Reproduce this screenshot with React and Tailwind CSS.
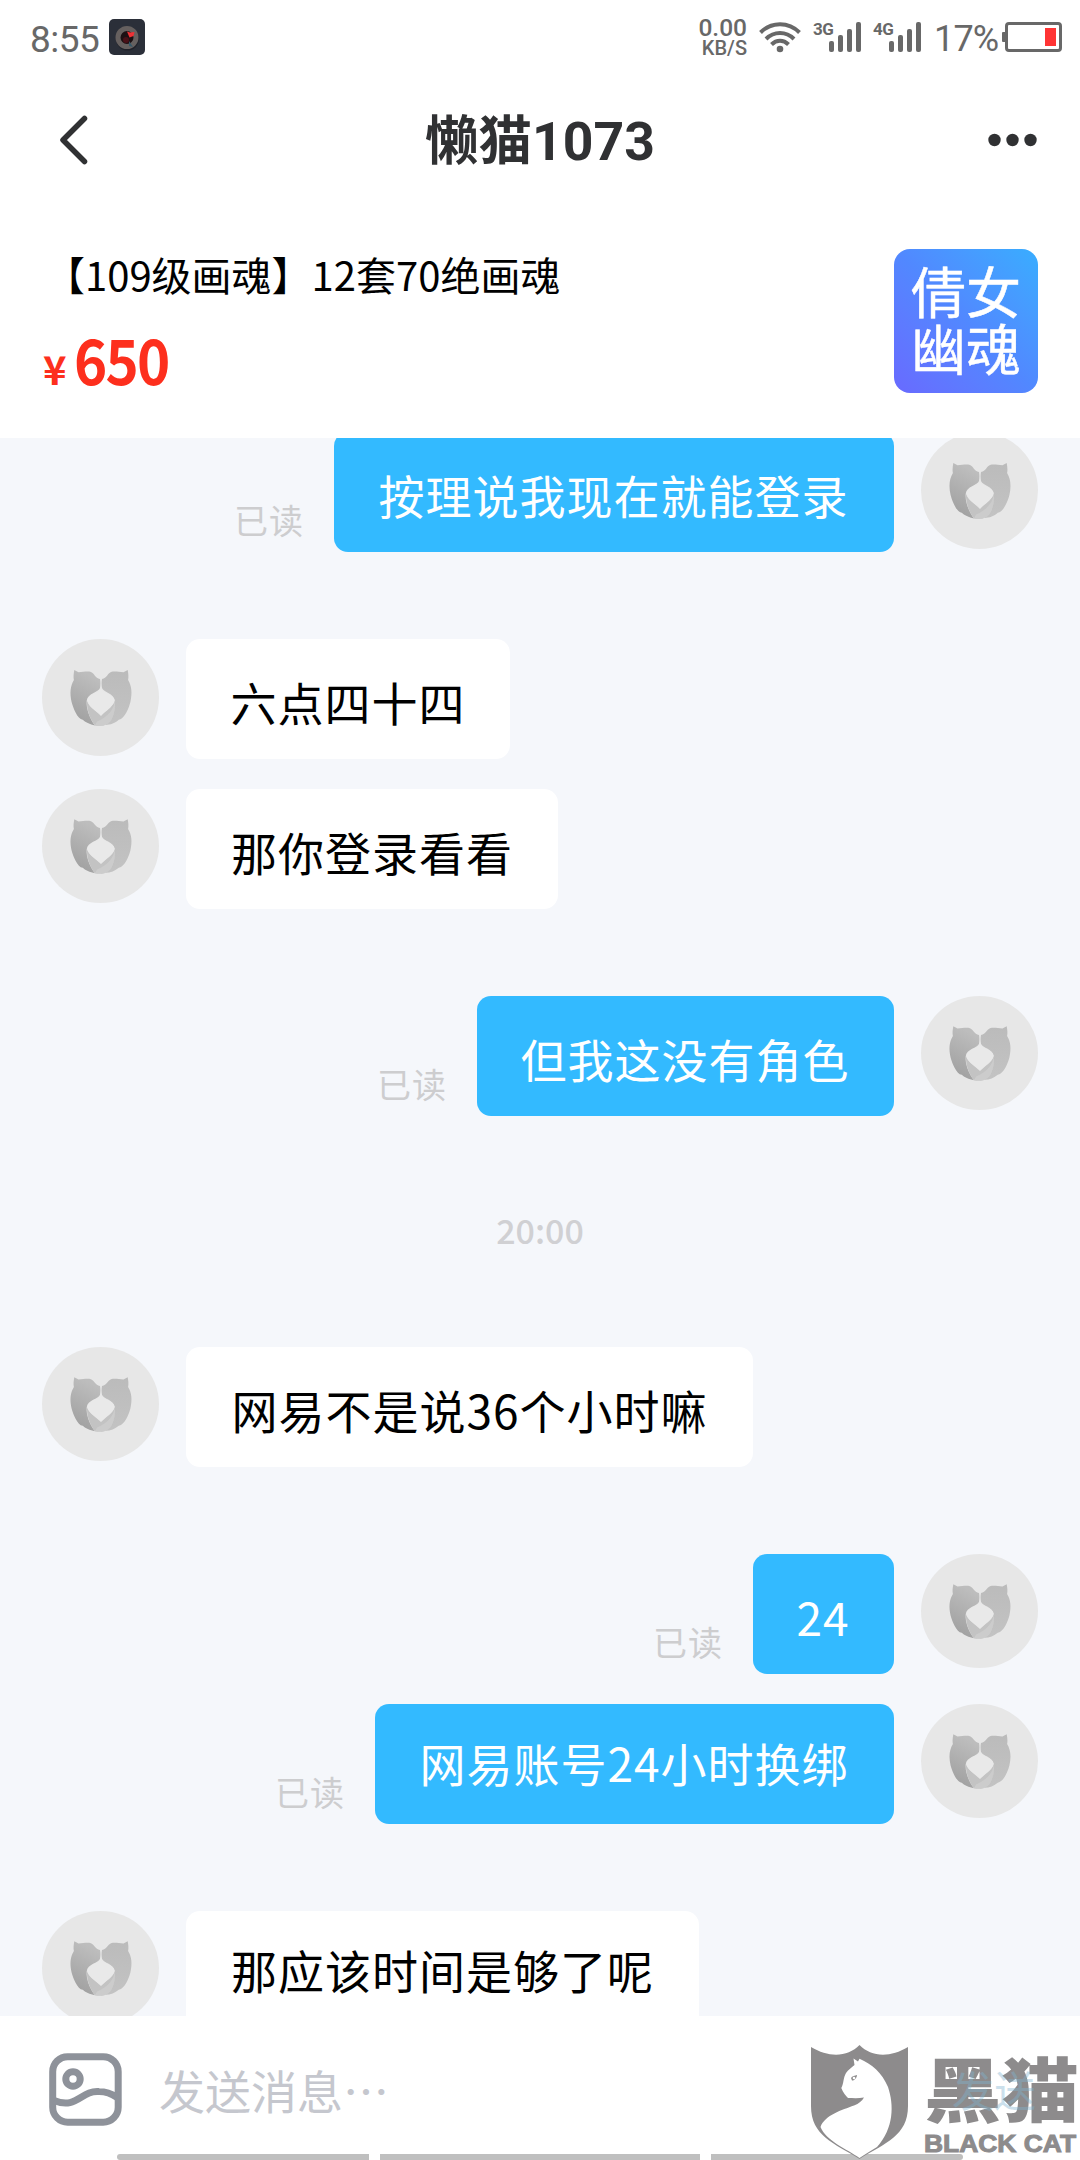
const CJK = "font-['Noto_Sans_CJK_SC',sans-serif]";

function Avatar({ tall }) {
  return (
    <div className={`flex w-[117px] shrink-0 items-center justify-center rounded-[50%] bg-[#e7e7e7] ${tall ? "h-[117px]" : "h-[114px]"}`}>
      <svg className={tall ? "h-[117px] w-[117px]" : "h-[114px] w-[117px]"} viewBox="0 0 117 117" preserveAspectRatio="none">
        <defs>
          <linearGradient id="catLeft" x1="0.3" y1="0" x2="0" y2="1">
            <stop offset="0" stopColor="#bdbdbd" />
            <stop offset="0.45" stopColor="#aeaeae" />
            <stop offset="1" stopColor="#9c9c9c" />
          </linearGradient>
          <linearGradient id="catRight" x1="0" y1="0" x2="0" y2="1">
            <stop offset="0" stopColor="#bbbbbb" />
            <stop offset="1" stopColor="#c3c3c3" />
          </linearGradient>
        </defs>
        <path fill="url(#catLeft)" d="M32.3 31L36.5 33.3C41 33.2 45 32 49 33C52.5 34.5 53 39 58 40C58.6 43 58.5 46 58 49C56.500 53.500 45.500 54 44.700 62C44 70 48 80 53 86.500C48 85.500 43 83 40.700 80.800C35.500 80.300 31 68.500 29.600 63C27.600 54 28.300 47 31.900 41C31.200 38 31.700 34.500 32.300 31Z" />
        <path fill="url(#catRight)" d="M85.700 31L81.500 33.300C77 33.200 73 32 69 33C65.500 34.500 65 39 60 40C59.400 43 59.500 46 60 49C61.500 53.500 72 54 72.900 62C73.500 70 71.500 75 69.500 80L63 86C69 86 73 84 76.800 80.800C83 79.500 87 68.500 88.400 63C90.400 54 89.700 47 86.100 41C86.800 38 86.300 34.500 85.700 31Z" />
        <path fill="#c3c3c3" d="M44.700 61C47 68.500 54 71.500 59 77C64 71.500 70 69 72.900 61C74 71 71.500 77 69.500 80.500C66 86 60 88.200 53 86.500C48 80 45 72 44.700 61Z" />
        <path fill="#d0d0d0" opacity=".7" d="M72.900 61C72.500 70 66 78 55 82.500L53 86.500C60 88.200 67 86 69.500 80.500C72 76 73.500 69 72.900 61Z" />
        <path fill="#e9e9e9" d="M59 49.500C60.500 53.500 71 55 72.600 61C72.500 67 64 71 59 76.500C54 71 46 68 45.400 61C46.500 55 57 53.500 59 49.500Z" />
      </svg>
    </div>
  );
}

function Received({ children, width, tall, pad = "pt-1" }) {
  return (
    <div className="flex h-[120px] items-start gap-[27px] pl-[42px]">
      <Avatar tall={tall} />
      <div className={`flex h-[120px] items-center justify-center rounded-[14px] bg-white text-[46px] leading-none tracking-[1px] whitespace-nowrap text-black ${pad} ${width}`}>{children}</div>
    </div>
  );
}

function Sent({ children, width, tall, pad = "pt-1" }) {
  return (
    <div className="flex h-[120px] items-start justify-end pr-[42px]">
      <span className="mr-[30px] pt-[69px] text-[34px] leading-[38px] tracking-[1px] text-[#cdcdcf]">已读</span>
      <div className={`mr-[27px] flex h-[120px] items-center justify-center rounded-[14px] bg-[#33baff] pr-px text-[46px] leading-none tracking-[1px] whitespace-nowrap text-white ${pad} ${width}`}>{children}</div>
      <Avatar tall={tall} />
    </div>
  );
}

function Signal({ label }) {
  return (
    <div className="flex h-[30px] w-[48px] items-end">
      <span className="mr-[-6px] w-[22px] self-start font-[Roboto] text-[17px] leading-[15px] font-bold tracking-[-0.500px]">{label}</span>
      <div className="flex items-end gap-1">
        <i className="h-[11px] w-[5px] rounded-[2px] bg-[#686868]" />
        <i className="h-[17px] w-[5px] rounded-[2px] bg-[#686868]" />
        <i className="h-[23px] w-[5px] rounded-[2px] bg-[#686868]" />
        <i className="h-[30px] w-[5px] rounded-[2px] bg-[#686868]" />
      </div>
    </div>
  );
}

function StatusBar() {
  return (
    <div className="flex h-[75px] items-start justify-between pt-[18px] pr-[18px] pl-[30px] font-[Roboto] text-[#686868]">
      <div className="flex items-start gap-[9px]">
        <span className="w-[70px] text-[37px] leading-[43px] tracking-[-0.500px]">8:55</span>
        <svg className="mt-px h-9 w-9" viewBox="0 0 36 36">
          <rect width="36" height="36" rx="5" fill="#2b2f39" />
          <circle cx="18.500" cy="20" r="11.500" fill="#20222a" />
          <circle cx="18" cy="18.500" r="9" fill="#1c1013" stroke="#66605f" strokeWidth="5" />
          <path d="M18 12.500l3 1 4.500-.5-1 4-4 1.500z" fill="#ef3135" />
          <path d="M20 22l4 6-4-1z" fill="#355768" />
          <circle cx="17" cy="21" r="3" fill="#4a1118" />
        </svg>
      </div>
      <div className="flex items-start">
        <div className="mr-3 flex w-[50px] flex-col items-end font-medium">
          <span className="text-[24.500px] leading-[20px]">0.00</span>
          <span className="text-[20px] leading-[20px]">KB/S</span>
        </div>
        <svg className="mt-1 mr-[12px] h-[31px] w-[42px]" viewBox="0 0 42 31" fill="none" stroke="#686868" strokeWidth="4">
          <path d="M1.500 10.500C12.500-.5 29.500-.5 40.500 10.500M7 17C15 9 27 9 35 17M12.500 22.500C17.500 17.500 24.500 17.500 29.500 22.500" />
          <circle cx="21" cy="27" r="3.300" fill="#686868" stroke="none" />
        </svg>
        <div className="mt-1 flex gap-3">
          <Signal label="3G" />
          <Signal label="4G" />
        </div>
        <span className="ml-[13px] w-[68px] text-[36px] leading-[43px] tracking-[-0.800px]">17%</span>
        <svg className="mt-1 h-[30px] w-[60px]" viewBox="0 0 60 30">
          <rect x="0" y="10" width="5" height="10" rx="1" fill="#686868" />
          <rect x="4.500" y="1.500" width="54" height="27" rx="2.500" fill="none" stroke="#686868" strokeWidth="3" />
          <rect x="43" y="6" width="11" height="18" fill="#ff3434" />
        </svg>
      </div>
    </div>
  );
}

function Watermark() {
  return (
    <div className="absolute top-[28px] left-[811px] flex h-[116px] w-[269px] text-[#8d8b8c]">
      <svg className="h-[116px] w-[97px] shrink-0" viewBox="0 0 97 116">
        <path fill="#8d8b8c" d="M0 3C18 14 37 13 48.500 1C60 13 79 14 97 3V62C97 92 74 99 48.500 115C23 99 0 92 0 62Z" />
        <path fill="#fff" d="M42.500 14.500L47 17.500L48.500 14.800C61 20 71 29 77 43C83 61 83 84 66 103C60 107 54 110 48.500 114C36 105 15 97 9.500 83C14 71 31 66 43 61.500C48 59.500 51 57 53 53.500C47 54.500 42 54 37 54C35 52 32 48.500 30.300 44C33 39 32 34 35 29C37 26 41 23 43.500 21Z" />
        <path fill="#8d8b8c" d="M40 34C41 32 44 31.500 46 31C46 34 43 37 41 36.500Z" />
        <circle cx="43" cy="34" r="1.300" fill="#fff" />
      </svg>
      <div className="ml-[16px] flex w-[153px] flex-col">
        <span className="mt-[8px] h-[70px] origin-top-left scale-x-[1.020] scale-y-[0.930] text-[76px] leading-[74px] font-black whitespace-nowrap">黑猫</span>
        <span className="mt-[9px] origin-left scale-x-[1.100] font-['Liberation_Sans',sans-serif] text-[24px] leading-[26px] font-bold whitespace-nowrap [-webkit-text-stroke:1px_#8d8b8c]">BLACK CAT</span>
      </div>
    </div>
  );
}

export default function App() {
  return (
    <div className={`flex h-[2160px] w-[1080px] flex-col overflow-hidden bg-[#f5f7fb] ${CJK}`}>
      <header className="h-[438px] shrink-0 bg-white">
        <StatusBar />
        <div className="flex h-[129px] items-center justify-between px-[42px]">
          <svg className="h-[54px] w-[54px]" viewBox="0 0 54 54" fill="none" stroke="#303133" strokeWidth="5.500" strokeLinecap="round" strokeLinejoin="round">
            <path d="M42.500 5.500L21 27L42.500 48.500" />
          </svg>
          <h1 className="pt-1 font-[Roboto,'Noto_Sans_CJK_SC',sans-serif] text-[53.500px] leading-[60px] font-bold text-[#303133]">懒猫1073</h1>
          <svg className="h-[54px] w-[54px]" viewBox="0 0 54 54" fill="#303133">
            <circle cx="10.500" cy="27" r="6.200" />
            <circle cx="28.500" cy="27" r="6.200" />
            <circle cx="46.500" cy="27" r="6.200" />
          </svg>
        </div>
        <div className="flex justify-between pt-[45px] pr-[42px] pl-[45px]">
          <div className="flex flex-col">
            <span className="-mt-0.5 text-[40px] leading-[54px] text-black">【109级画魂】12套70绝画魂</span>
            <div className="mt-[19px] ml-[-2px] flex items-baseline text-[#fd2f1d]">
              <span className="w-[31px] text-[40px] leading-[60px] font-bold">¥</span>
              <span className="origin-left scale-x-[0.910] text-[62px] leading-[76px] font-bold tracking-[-2px]">650</span>
            </div>
          </div>
          <div className="flex h-36 w-36 flex-col items-center justify-center rounded-2xl bg-linear-to-bl from-[#38adff] via-[#5188ff] to-[#686aff] pb-[6px] text-[55px] leading-[57px] text-white [-webkit-text-stroke:0.500px_white]">
            <span>倩女</span>
            <span>幽魂</span>
          </div>
        </div>
      </header>

      <main className="flex h-[1578px] shrink-0 flex-col overflow-hidden">
        <div className="-mt-1.5 flex flex-col">
          <Sent width="w-[560px]" tall>按理说我现在就能登录</Sent>
          <div className="mt-[87px] flex flex-col gap-[30px]">
            <Received width="w-[324px]" tall>六点四十四</Received>
            <Received width="w-[372px]">那你登录看看</Received>
          </div>
          <div className="mt-[87px]">
            <Sent width="w-[417px]">但我这没有角色</Sent>
          </div>
          <time className="flex h-[231px] items-center justify-center pb-[5px] text-[34px] font-medium text-[#d0d0d3]">20:00</time>
          <Received width="w-[567px]">网易不是说36个小时嘛</Received>
          <div className="mt-[87px] flex flex-col gap-[30px]">
            <Sent width="w-[141px]">24</Sent>
            <Sent width="w-[519px]" pad="pb-1">网易账号24小时换绑</Sent>
          </div>
          <div className="mt-[87px]">
            <Received width="w-[513px]" pad="pb-1">那应该时间是够了呢</Received>
          </div>
        </div>
      </main>

      <footer className="relative flex h-36 shrink-0 flex-col justify-between bg-white">
        <div className="flex h-[138px] items-center pt-[8px] pl-[49px]">
          <svg className="h-[73px] w-[73px]" viewBox="0 0 73 73" fill="none" stroke="#8e929a" strokeWidth="7">
            <rect x="3.700" y="3.700" width="65.500" height="65.500" rx="15" />
            <circle cx="24" cy="26" r="7.200" />
            <path d="M5 47.500C28 57 32 37 50 38.500C57 38.500 63 41 68 44.500" />
          </svg>
          <span className="ml-[37px] text-[46px] leading-[60px] text-[#c5c7ce]">发送消息…</span>
          <span className="relative z-10 mr-[44px] ml-auto text-[42px] leading-[60px] text-[#7fb4d0] opacity-40">发送</span>
        </div>
        <div className="flex h-1.5 gap-[11px] pl-[117px]">
          <i className="w-[252px] rounded-l-full bg-[#bfbfbf]" />
          <i className="w-[320px] bg-[#bfbfbf]" />
          <i className="w-[252px] rounded-r-full bg-[#bfbfbf]" />
        </div>
        <Watermark />
      </footer>
    </div>
  );
}
